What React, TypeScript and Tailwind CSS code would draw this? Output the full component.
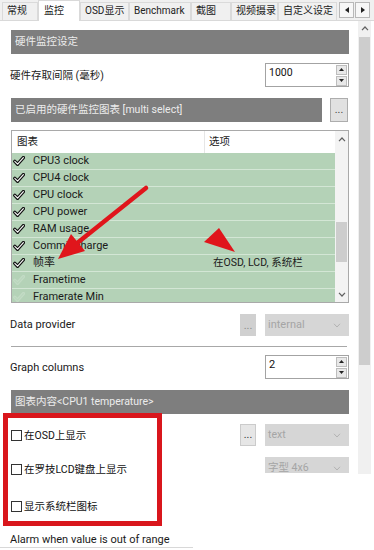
import React from "react";

const tabs = [
  { label: "常规", w: "w-[36px]", on: false },
  { label: "监控", w: "w-[42px]", on: true },
  { label: "OSD显示", w: "w-[49px]", on: false },
  { label: "Benchmark", w: "w-[62px]", on: false },
  { label: "截图", w: "w-[40px]", on: false },
  { label: "视频摄录", w: "w-[47px]", on: false },
  { label: "自定义设定", w: "w-[59px]", on: false },
];

type Row = { name: string; on: boolean; opt?: string };

const rows: Row[] = [
  { name: "CPU3 clock", on: true },
  { name: "CPU4 clock", on: true },
  { name: "CPU clock", on: true },
  { name: "CPU power", on: true },
  { name: "RAM usage", on: true },
  { name: "Commit charge", on: true },
  { name: "帧率", on: true, opt: "在OSD, LCD, 系统栏" },
  { name: "Frametime", on: false },
  { name: "Framerate Min", on: false },
];

function Chevron({ up }: { up?: boolean }) {
  return (
    <svg width="8" height="5" viewBox="0 0 8 5">
      <polyline
        points={up ? "1,4.2 4,1 7,4.2" : "1,0.8 4,4 7,0.8"}
        fill="none"
        stroke="#606060"
        strokeWidth="1.2"
      />
    </svg>
  );
}

function Check({ on }: { on: boolean }) {
  return (
    <svg width="12" height="10" viewBox="0 0 12 10">
      <path
        d="M1.8 5.4 L4.6 8.2 L10.4 1.6"
        fill="none"
        stroke={on ? "#111" : "#c3dbc5"}
        strokeWidth="3.4"
        strokeLinecap="round"
        strokeLinejoin="round"
      />
      <path
        d="M1.8 5.4 L4.6 8.2 L10.4 1.6"
        fill="none"
        stroke={on ? "#fff" : "#bad6bd"}
        strokeWidth="1.1"
        strokeLinecap="round"
        strokeLinejoin="round"
      />
    </svg>
  );
}

function SpinBox({ value }: { value: string }) {
  return (
    <div className="w-[84px] h-[24px] border border-[#a3a3a3] bg-white flex justify-between">
      <span className="pl-[3px] pt-[1px] leading-[15px] text-[#111]">{value}</span>
      <div className="flex flex-col justify-center gap-px pr-px">
        <div className="w-[11px] h-[10px] bg-[#e8e8e8] border border-[#bdbdbd] flex items-center justify-center">
          <svg width="5" height="3" viewBox="0 0 5 3">
            <polygon points="0,3 2.5,0 5,3" fill="#222" />
          </svg>
        </div>
        <div className="w-[11px] h-[10px] bg-[#e8e8e8] border border-[#bdbdbd] flex items-center justify-center">
          <svg width="5" height="3" viewBox="0 0 5 3">
            <polygon points="0,0 2.5,3 5,0" fill="#222" />
          </svg>
        </div>
      </div>
    </div>
  );
}

function Dropdown({ value, h = "h-[22px]" }: { value: string; h?: string }) {
  return (
    <div className={`w-[84px] ${h} bg-[#d6d6d6] flex items-start justify-between pl-[3px] pr-[8px] pt-[3px]`}>
      <span className="text-[#a5a5a5] leading-[15px]">{value}</span>
      <svg width="8" height="5" viewBox="0 0 8 5" className="mt-[6px]">
        <polyline points="1,0.8 4,4 7,0.8" fill="none" stroke="#b2b2b2" strokeWidth="1" />
      </svg>
    </div>
  );
}

function Header({ text, w = "w-[338px]" }: { text: string; w?: string }) {
  return (
    <div className={`${w} h-[24px] bg-[#7e7e7e] text-[#ececec] pl-[4px] flex items-center`}>{text}</div>
  );
}

function CheckLine({ text }: { text: string }) {
  return (
    <div className="flex items-center pl-[11px] leading-[15px] text-[#111]">
      <div className="w-[11px] h-[11px] border border-[#333] bg-white mr-[2px]" />
      {text}
    </div>
  );
}

export default function App() {
  return (
    <div className="w-[374px] h-[550px] overflow-hidden bg-white relative whitespace-nowrap text-[10.5px] font-['Roboto','Noto_Sans_CJK_SC',sans-serif] text-[#1a1a1a]">
      {/* tabs */}
      <div className="h-[21px] bg-[#f0f0f0] border-b border-[#d9d9d9] flex items-end pl-[2px]">
        {tabs.map(t => (
          <div
            key={t.label}
            className={
              t.on
                ? `${t.w} h-[21px] -mb-px bg-white border border-b-0 border-[#d9d9d9] pl-[5px] pt-[2px] leading-[15px] text-[10px]`
                : `${t.w} h-[18px] bg-[#f0f0f0] border border-b-0 border-[#dadada] pl-[4px] leading-[16px] text-[10px] text-[#222] overflow-hidden`
            }
          >
            {t.label}
          </div>
        ))}
        <div className="flex gap-px ml-[2px] mb-[2px]">
          <div className="w-[15px] h-[16px] bg-[#f7f7f7] border border-[#b8b8b8] flex items-center justify-center">
            <svg width="4" height="6" viewBox="0 0 4 6">
              <polygon points="4,0 0,3 4,6" fill="#222" />
            </svg>
          </div>
          <div className="w-[15px] h-[16px] bg-[#f7f7f7] border border-[#b8b8b8] flex items-center justify-center">
            <svg width="4" height="6" viewBox="0 0 4 6">
              <polygon points="0,0 4,3 0,6" fill="#222" />
            </svg>
          </div>
        </div>
      </div>

      <div className="flex">
        <div className="w-[358px] flex flex-col">
          <div className="mt-[9px] ml-[11px]">
            <Header text="硬件监控设定" />
          </div>

          <div className="mt-[9px] h-[24px] flex items-center justify-between pl-[10px] pr-[9px]">
            <span className="pt-[2px]">硬件存取间隔 (毫秒)</span>
            <SpinBox value="1000" />
          </div>

          <div className="mt-[11px] ml-[11px] flex gap-[8px]">
            <Header text="已启用的硬件监控图表 [multi select]" w="w-[311px]" />
            <div className="w-[18px] h-[24px] bg-[#e1e1e1] border border-[#adadad] flex items-center justify-center text-[#444] leading-none">
              ...
            </div>
          </div>

          {/* list */}
          <div className="mt-[8px] ml-[11px] w-[338px] h-[173px] border border-[#a9a9a9] flex overflow-hidden">
            <div className="w-[323px] flex flex-col">
              <div className="h-[22px] shrink-0 flex bg-white">
                <div className="w-[193px] border-r border-[#e6e6e6] pl-[5px] flex items-center">图表</div>
                <div className="pl-[4px] flex items-center">选项</div>
              </div>
              {rows.map(r => (
                <div
                  key={r.name}
                  className="h-[17px] shrink-0 bg-[#b4d2b7] border-b border-[#d3e6d5] flex items-center"
                >
                  <div className="w-[193px] flex items-center pl-px">
                    <Check on={r.on} />
                    <span className="ml-[8px] text-[11px] text-[#1a1a1a]">{r.name}</span>
                  </div>
                  <span className="pl-[8px]">{r.opt}</span>
                </div>
              ))}
            </div>
            <div className="w-[13px] bg-[#f3f3f3] flex flex-col">
              <div className="h-[17px] flex items-center justify-center">
                <Chevron up />
              </div>
              <div className="mt-[74px] h-[40px] mx-px bg-[#cdcdcd]" />
              <div className="flex-1" />
              <div className="h-[16px] flex items-center justify-center">
                <Chevron />
              </div>
            </div>
          </div>

          <div className="mt-[11px] h-[22px] flex items-center pl-[10px] pr-[9px] text-[11px]">
            <span className="flex-1">Data provider</span>
            <div className="w-[16px] h-[22px] bg-[#d0d0d0] flex items-center justify-center text-[#8a8a8a] leading-none mr-[9px]">
              ...
            </div>
            <Dropdown value="internal" />
          </div>

          <div className="mt-[10px] ml-[11px] w-[336px] border-t border-[#a8a8a8]" />

          <div className="mt-[8px] h-[24px] flex items-center justify-between pl-[10px] pr-[9px] text-[11px]">
            <span className="pt-[3px]">Graph columns</span>
            <SpinBox value="2" />
          </div>

          <div className="mt-[11px] ml-[11px]">
            <Header text="图表内容<CPU1 temperature>" />
          </div>

          <div className="mt-[10px] h-[22px] flex items-center pr-[9px]">
            <div className="flex-1">
              <CheckLine text="在OSD上显示" />
            </div>
            <div className="w-[16px] h-[22px] bg-[#e6e6e6] border border-[#cbcbcb] flex items-center justify-center text-[#333] leading-none mr-[9px]">
              ...
            </div>
            <Dropdown value="text" />
          </div>

          <div className="mt-[11px] h-[16px] flex items-start pr-[9px]">
            <div className="flex-1 pt-[5px]">
              <CheckLine text="在罗技LCD键盘上显示" />
            </div>
            <Dropdown value="字型 4x6" h="h-[16px]" />
          </div>

          <div className="mt-[26px]">
            <CheckLine text="显示系统栏图标" />
          </div>

          <div className="mt-[18px] w-[193px] h-[16px] border-b border-[#d8d8d8] pl-[10px] leading-[15px] text-[11px]">
            Alarm when value is out of range
          </div>
        </div>

        {/* main scrollbar */}
        <div className="w-[13px] h-[453px] bg-[#f0f0f0] flex flex-col">
          <div className="h-[15px] flex items-center justify-center">
            <Chevron up />
          </div>
          <div className="mt-px h-[328px] mx-px bg-[#cdcdcd]" />
        </div>
      </div>

      {/* red annotations */}
      <svg className="absolute left-0 top-0 pointer-events-none" width="374" height="550" viewBox="0 0 374 550">
        <rect x="5.5" y="415.5" width="154" height="108" fill="none" stroke="#d9161c" strokeWidth="5" />
        <line x1="146" y1="188" x2="76" y2="244" stroke="#e0151b" strokeWidth="4.5" strokeLinecap="round" />
        <polygon points="58,259 85,251 71,234" fill="#e0151b" />
        <polygon points="235,252 204,242 219,228" fill="#e0151b" />
      </svg>
    </div>
  );
}
